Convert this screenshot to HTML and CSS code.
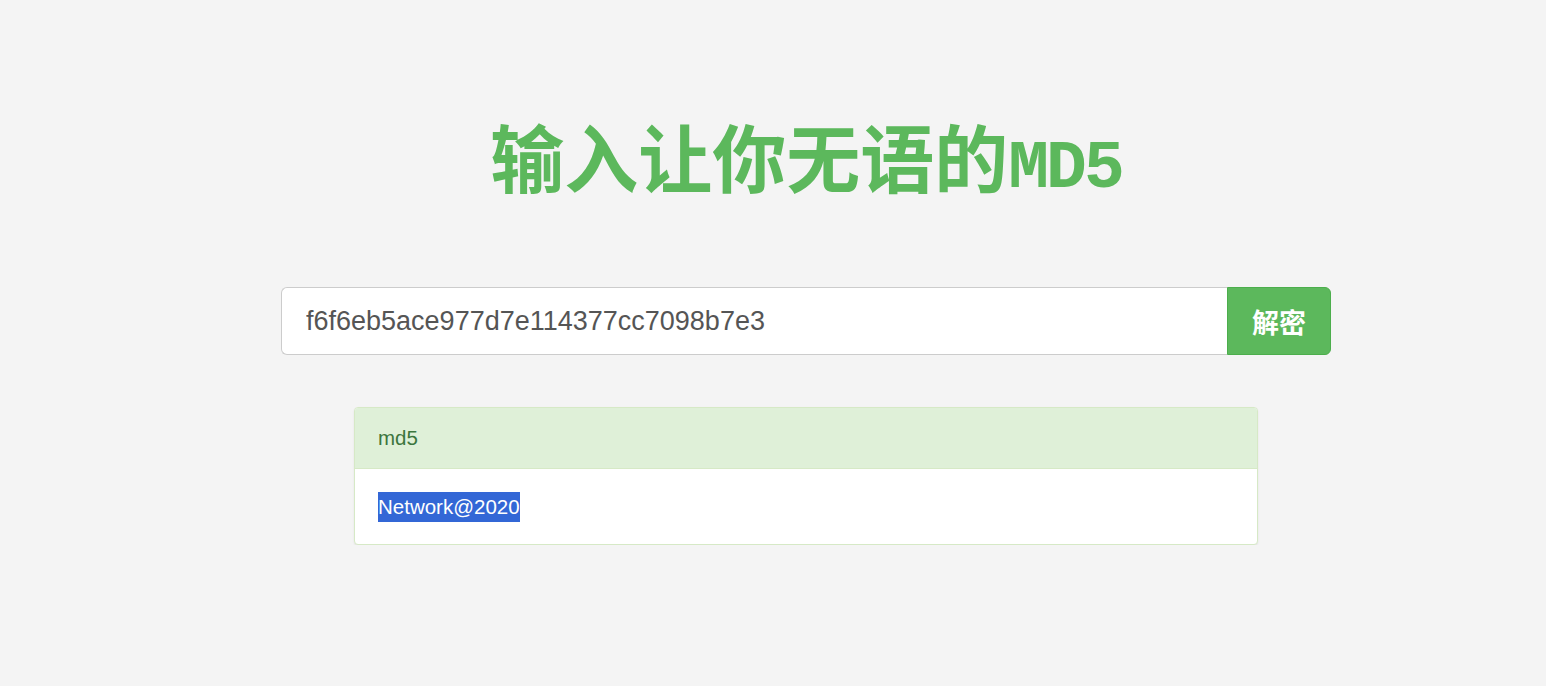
FILE: index.html
```html
<!DOCTYPE html>
<html lang="zh">
<head>
<meta charset="utf-8">
<title>输入让你无语的MD5</title>
<link rel="stylesheet" href="styles.css">
</head>
<body>
<div class="container">
  <h1 class="title">输入让你无语的<span class="latin">MD5</span></h1>
  <div class="input-group">
    <input class="md5-input" type="text" value="f6f6eb5ace977d7e114377cc7098b7e3">
    <button class="btn">解密</button>
  </div>
  <div class="panel">
    <div class="panel-heading">md5</div>
    <div class="panel-body"><span class="sel">Network@2020</span></div>
  </div>
</div>
</body>
</html>
```
FILE: styles.css
```css
html, body {
  margin: 0;
  padding: 0;
  background: #f4f4f4;
  font-family: "Liberation Sans", Arial, "Noto Sans CJK SC", sans-serif;
  color: #333;
}
.container {
  width: 1050px;
  margin: 0 auto;
  padding-left: 66px;
  box-sizing: content-box;
  display: flex;
  flex-direction: column;
  align-items: center;
}
.title {
  margin: 110px 0 0;
  height: 90px;
  line-height: 90px;
  font-family: "Noto Sans CJK SC", sans-serif;
  font-size: 74px;
  font-weight: 700;
  color: #5cb85c;
  white-space: nowrap;
}
.title .latin {
  font-family: "Liberation Mono", "DejaVu Sans Mono", monospace;
  font-size: 68px;
  letter-spacing: -3px;
}
.input-group {
  margin-top: 87px;
  width: 1050px;
  height: 68px;
  display: flex;
}
.md5-input {
  flex: 1;
  min-width: 0;
  height: 68px;
  box-sizing: border-box;
  border: 1px solid #ccc;
  border-right: none;
  border-radius: 6px 0 0 6px;
  background: #fff;
  padding: 0 24px;
  font-family: "Liberation Sans", Arial, sans-serif;
  font-size: 27px;
  color: #555;
  outline: none;
}
.btn {
  width: 104px;
  height: 68px;
  box-sizing: border-box;
  border: 1px solid #4cae4c;
  border-radius: 0 6px 6px 0;
  background: #5cb85c;
  color: #fff;
  font-family: "Noto Sans CJK SC", sans-serif;
  font-size: 27px;
  font-weight: 700;
  padding: 0;
}
.panel {
  margin-top: 52px;
  width: 904px;
  box-sizing: border-box;
  border: 1px solid #d6e9c6;
  border-radius: 4px;
  background: #fff;
  box-shadow: 0 1px 2px rgba(0,0,0,.08);
  overflow: hidden;
}
.panel-heading {
  height: 61px;
  box-sizing: border-box;
  background: #dff0d8;
  border-bottom: 1px solid #d6e9c6;
  color: #3c763d;
  font-size: 20.5px;
  padding: 0 23px;
  display: flex;
  align-items: center;
}
.panel-body {
  height: 75px;
  box-sizing: border-box;
  padding: 0 23px;
  display: flex;
  align-items: center;
  font-size: 20.5px;
  color: #333;
}
.sel {
  background: #3367d6;
  color: #fff;
  line-height: 30px;
}
```
